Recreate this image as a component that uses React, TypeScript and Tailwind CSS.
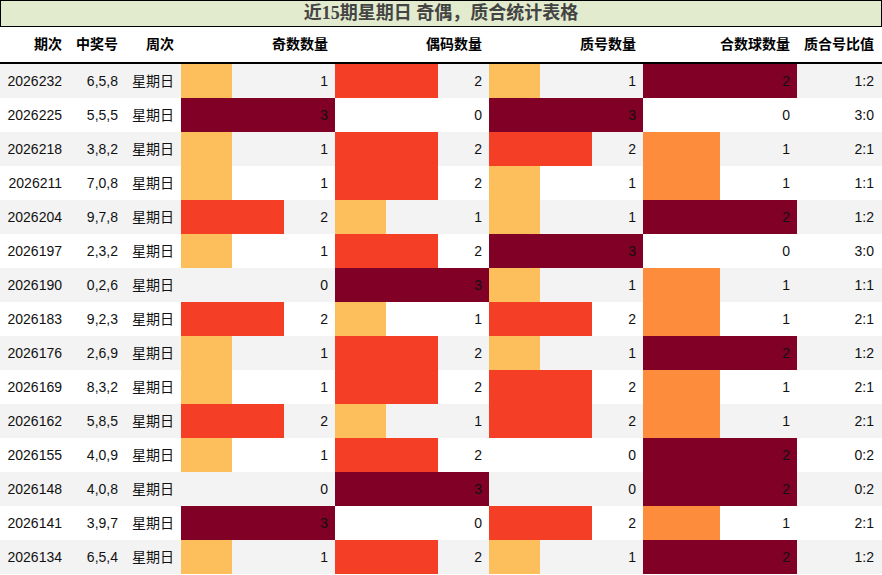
import React from "react";

type Row = [string, string, number, number, number, number, string];

const rows: Row[] = [
  ["2026232", "6,5,8", 1, 2, 1, 2, "1:2"],
  ["2026225", "5,5,5", 3, 0, 3, 0, "3:0"],
  ["2026218", "3,8,2", 1, 2, 2, 1, "2:1"],
  ["2026211", "7,0,8", 1, 2, 1, 1, "1:1"],
  ["2026204", "9,7,8", 2, 1, 1, 2, "1:2"],
  ["2026197", "2,3,2", 1, 2, 3, 0, "3:0"],
  ["2026190", "0,2,6", 0, 3, 1, 1, "1:1"],
  ["2026183", "9,2,3", 2, 1, 2, 1, "2:1"],
  ["2026176", "2,6,9", 1, 2, 1, 2, "1:2"],
  ["2026169", "8,3,2", 1, 2, 2, 1, "2:1"],
  ["2026162", "5,8,5", 2, 1, 2, 1, "2:1"],
  ["2026155", "4,0,9", 1, 2, 0, 2, "0:2"],
  ["2026148", "4,0,8", 0, 3, 0, 2, "0:2"],
  ["2026141", "3,9,7", 3, 0, 2, 1, "2:1"],
  ["2026134", "6,5,4", 1, 2, 1, 2, "1:2"],
];

const colors3: Record<number, string> = { 1: "#fdbe5c", 2: "#f43f26", 3: "#800026" };
const colors2: Record<number, string> = { 1: "#fd8d3c", 2: "#800026" };

function BarCell({ v, max }: { v: number; max: number }) {
  const color = max === 3 ? colors3[v] : colors2[v];
  const w = (v / max) * 154;
  return (
    <div className="relative h-[34px] w-[154px]">
      {v > 0 && (
        <div
          className="absolute left-0 top-0 h-full"
          style={{ width: `${w}px`, backgroundColor: color }}
        />
      )}
      <div className="relative flex h-full items-center justify-end pr-[7px]">{v}</div>
    </div>
  );
}

const grid = "grid grid-cols-[69px_56px_56px_154px_154px_154px_154px_85px]";

export default function App() {
  return (
    <div
      className="w-[882px] h-[575px] overflow-hidden bg-white text-[14px] text-[#111]"
      style={{ fontFamily: '"Liberation Sans", "Noto Sans CJK SC", sans-serif' }}
    >
      <div className="flex h-[27px] items-center justify-center border border-black bg-[#e2ebcd]">
        <span
          className="text-[18px] font-bold text-[#444]"
          style={{ fontFamily: '"Liberation Serif", "Noto Sans CJK SC", serif' }}
        >
          近15期星期日 奇偶，质合统计表格
        </span>
      </div>
      <div className={`${grid} h-[37px] items-center border-b-2 border-black font-bold text-black`}>
        <div className="pr-[7px] text-right">期次</div>
        <div className="pr-[7px] text-right">中奖号</div>
        <div className="pr-[7px] text-right">周次</div>
        <div className="pr-[7px] text-right">奇数数量</div>
        <div className="pr-[7px] text-right">偶码数量</div>
        <div className="pr-[7px] text-right">质号数量</div>
        <div className="pr-[7px] text-right">合数球数量</div>
        <div className="pr-[8px] text-right">质合号比值</div>
      </div>
      {rows.map((r, i) => (
        <div
          key={r[0]}
          className={`${grid} h-[34px] items-center ${i % 2 === 0 ? "bg-[#f3f3f3]" : "bg-white"}`}
        >
          <div className="pr-[7px] text-right">{r[0]}</div>
          <div className="pr-[7px] text-right">{r[1]}</div>
          <div className="pr-[7px] text-right">星期日</div>
          <BarCell v={r[2]} max={3} />
          <BarCell v={r[3]} max={3} />
          <BarCell v={r[4]} max={3} />
          <BarCell v={r[5]} max={2} />
          <div className="pr-[8px] text-right">{r[6]}</div>
        </div>
      ))}
    </div>
  );
}
